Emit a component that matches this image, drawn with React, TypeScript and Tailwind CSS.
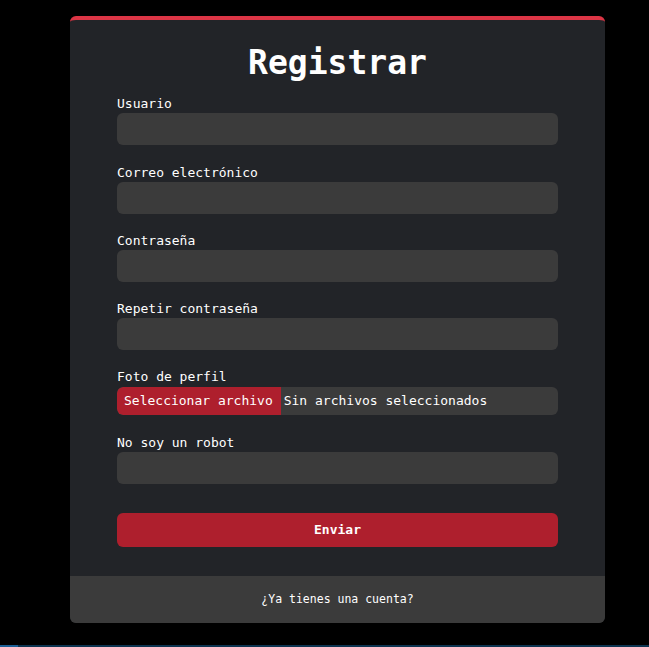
import React from 'react';

const fields = [
  { label: 'Usuario', type: 'text' },
  { label: 'Correo electrónico', type: 'email' },
  { label: 'Contraseña', type: 'password' },
  { label: 'Repetir contraseña', type: 'password' },
];

const App = () => {
  return (
    <div className="min-h-[647px] bg-black font-['DejaVu_Sans_Mono',monospace] text-white relative">
      <div className="pt-4 pl-[70px]">
        <div className="w-[535px] rounded-md overflow-hidden bg-[#222428] border-t-4 border-[#dc3545]">
          <div className="px-[47px] pt-[21px] pb-[29px]">
            <h1 className="text-[33px] leading-[44px] font-bold text-center mb-[10px]">Registrar</h1>

            {fields.map((f, i) => (
              <div key={f.label} className={i === 0 ? 'mb-[19px]' : 'mb-[18px]'}>
                <label className="block text-[13px] leading-[18px]">{f.label}</label>
                <input
                  type={f.type}
                  className="block w-full h-[32px] rounded-md bg-[#3b3b3b] outline-none px-3 text-[13px]"
                />
              </div>
            ))}

            {/* Foto de perfil */}
            <div className="mb-[19px]">
              <label className="block text-[13px] leading-[18px] mb-[1px]">Foto de perfil</label>
              <div className="flex items-center h-[28px] rounded-md bg-[#3b3b3b] overflow-hidden text-[13px]">
                <span className="h-full flex items-center pl-[7px] pr-[8px] bg-[#ae1f2d] rounded-l-md">Seleccionar archivo</span>
                <span className="pl-[3px]">Sin archivos seleccionados</span>
              </div>
            </div>

            <div className="mb-[29px]">
              <label className="block text-[13px] leading-[18px]">No soy un robot</label>
              <input type="text" className="block w-full h-[32px] rounded-md bg-[#3b3b3b] outline-none px-3 text-[13px]" />
            </div>

            <button className="w-full h-[34px] rounded-md bg-[#ae1f2d] text-[13px] font-bold">Enviar</button>
          </div>

          <div className="h-[47px] bg-[#3b3b3b] flex items-center justify-center text-[11.5px]">
            ¿Ya tienes una cuenta?
          </div>
        </div>
      </div>

      <div className="absolute bottom-0 left-0 right-0 h-[2px] bg-[#0d3450] flex">
        <div className="w-[18px] h-full bg-[#1b5f95]" />
      </div>
    </div>
  );
};

export default App;
